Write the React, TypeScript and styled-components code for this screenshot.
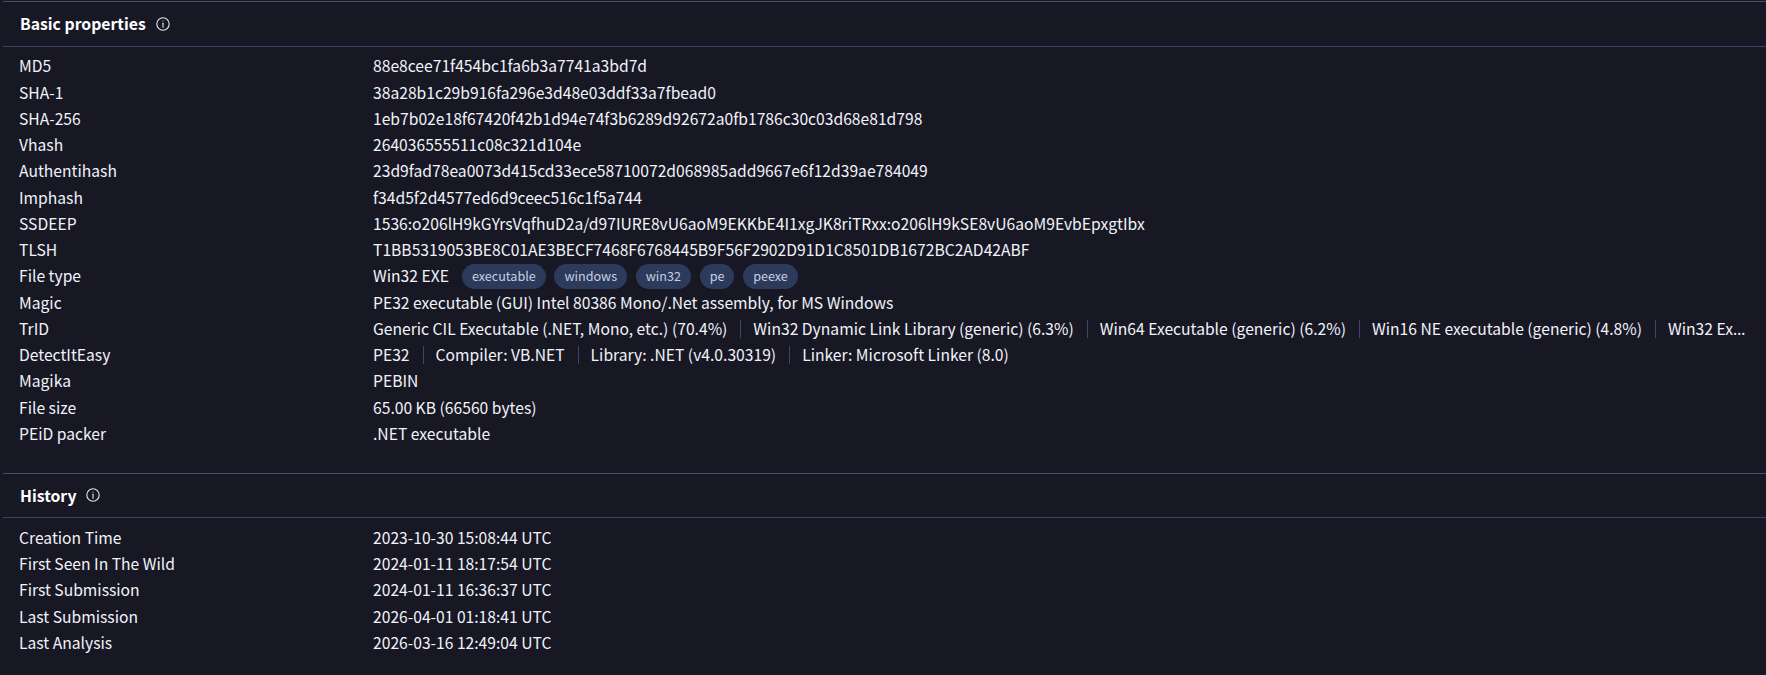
import React from 'react';
import styled, { createGlobalStyle } from 'styled-components';

const GlobalStyle = createGlobalStyle`
  html, body {
    margin: 0;
    background: #181825;
  }
`;

const Page = styled.div`
  width: 1766px;
  height: 675px;
  overflow: hidden;
  padding-left: 3px;
  box-sizing: border-box;
  font-family: 'Noto Sans CJK SC', 'Noto Sans', sans-serif;
  font-size: 15.67px;
  color: #f1f3f9;
`;

const Section = styled.section`
  border-top: 1px solid #464c6a;
  padding-bottom: 25.7px;
  &:first-child {
    margin-top: 1px;
  }
`;

const Header = styled.header`
  display: flex;
  align-items: center;
  gap: 10px;
  height: 43.75px;
  padding-left: 17px;
  border-bottom: 1px solid #3a4466;
`;

const Title = styled.h2`
  margin: 0;
  font-size: 15.75px;
  font-weight: 700;
  color: #ffffff;
`;

const Rows = styled.div`
  display: flex;
  flex-direction: column;
  padding: 6.4px 16px 0 16px;
`;

const Row = styled.div`
  display: grid;
  grid-template-columns: 354px minmax(0, 1fr);
  align-items: center;
  height: 26.25px;
  line-height: 26px;
`;

const Label = styled.div`
  white-space: nowrap;
`;

const Value = styled.div`
  display: flex;
  align-items: center;
  white-space: nowrap;
  overflow: hidden;
`;

const Pill = styled.span`
  display: inline-flex;
  align-items: center;
  height: 25px;
  padding: 0 10px;
  margin-left: 8.7px;
  border-radius: 13px;
  background: #2c3a5c;
  color: #c8cfe0;
  font-size: 12.6px;
  &:first-of-type {
    margin-left: 13px;
  }
`;

const Part = styled.span`
  position: relative;
  padding: 0 13px;
  flex: none;
  &:first-child {
    padding-left: 0;
  }
  &:last-child {
    padding-right: 0;
  }
  &:not(:first-child)::before {
    content: '';
    position: absolute;
    left: 0;
    top: 4px;
    height: 18px;
    width: 1px;
    background: #3f4663;
  }
`;

const Dots = styled.span`
  font-family: 'Noto Sans', sans-serif;
`;

function InfoIcon() {
  return (
    <svg width="14" height="14" viewBox="0 0 14 14" fill="none" stroke="#e4e7ef" strokeWidth="1.1">
      <circle cx="7" cy="7" r="6.2" />
      <path d="M7 6.2v4" strokeLinecap="round" />
      <circle cx="7" cy="4" r="0.6" fill="#e4e7ef" stroke="none" />
    </svg>
  );
}

const basicRows: [string, string][] = [
  ['MD5', '88e8cee71f454bc1fa6b3a7741a3bd7d'],
  ['SHA-1', '38a28b1c29b916fa296e3d48e03ddf33a7fbead0'],
  ['SHA-256', '1eb7b02e18f67420f42b1d94e74f3b6289d92672a0fb1786c30c03d68e81d798'],
  ['Vhash', '264036555511c08c321d104e'],
  ['Authentihash', '23d9fad78ea0073d415cd33ece58710072d068985add9667e6f12d39ae784049'],
  ['Imphash', 'f34d5f2d4577ed6d9ceec516c1f5a744'],
  ['SSDEEP', '1536:o206lH9kGYrsVqfhuD2a/d97IURE8vU6aoM9EKKbE4I1xgJK8riTRxx:o206lH9kSE8vU6aoM9EvbEpxgtIbx'],
  ['TLSH', 'T1BB5319053BE8C01AE3BECF7468F6768445B9F56F2902D91D1C8501DB1672BC2AD42ABF'],
];

const tags = ['executable', 'windows', 'win32', 'pe', 'peexe'];

const trid = [
  'Generic CIL Executable (.NET, Mono, etc.) (70.4%)',
  'Win32 Dynamic Link Library (generic) (6.3%)',
  'Win64 Executable (generic) (6.2%)',
  'Win16 NE executable (generic) (4.8%)',
];

const die = ['PE32', 'Compiler: VB.NET', 'Library: .NET (v4.0.30319)', 'Linker: Microsoft Linker (8.0)'];

const historyRows: [string, string][] = [
  ['Creation Time', '2023-10-30 15:08:44 UTC'],
  ['First Seen In The Wild', '2024-01-11 18:17:54 UTC'],
  ['First Submission', '2024-01-11 16:36:37 UTC'],
  ['Last Submission', '2026-04-01 01:18:41 UTC'],
  ['Last Analysis', '2026-03-16 12:49:04 UTC'],
];

export default function App() {
  return (
    <Page>
      <GlobalStyle />
      <Section>
        <Header>
          <Title>Basic properties</Title>
          <InfoIcon />
        </Header>
        <Rows>
          {basicRows.map(([k, v]) => (
            <Row key={k}>
              <Label>{k}</Label>
              <Value>{v}</Value>
            </Row>
          ))}
          <Row>
            <Label>File type</Label>
            <Value>
              Win32 EXE
              {tags.map((t) => (
                <Pill key={t}>{t}</Pill>
              ))}
            </Value>
          </Row>
          <Row>
            <Label>Magic</Label>
            <Value>PE32 executable (GUI) Intel 80386 Mono/.Net assembly, for MS Windows</Value>
          </Row>
          <Row>
            <Label>TrID</Label>
            <Value>
              {trid.map((t) => (
                <Part key={t}>{t}</Part>
              ))}
              <Part>
                Win32 Ex<Dots>…</Dots>
              </Part>
            </Value>
          </Row>
          <Row>
            <Label>DetectItEasy</Label>
            <Value>
              {die.map((t) => (
                <Part key={t}>{t}</Part>
              ))}
            </Value>
          </Row>
          <Row>
            <Label>Magika</Label>
            <Value>PEBIN</Value>
          </Row>
          <Row>
            <Label>File size</Label>
            <Value>65.00 KB (66560 bytes)</Value>
          </Row>
          <Row>
            <Label>PEiD packer</Label>
            <Value>.NET executable</Value>
          </Row>
        </Rows>
      </Section>
      <Section>
        <Header>
          <Title>History</Title>
          <InfoIcon />
        </Header>
        <Rows>
          {historyRows.map(([k, v]) => (
            <Row key={k}>
              <Label>{k}</Label>
              <Value>{v}</Value>
            </Row>
          ))}
        </Rows>
      </Section>
    </Page>
  );
}
